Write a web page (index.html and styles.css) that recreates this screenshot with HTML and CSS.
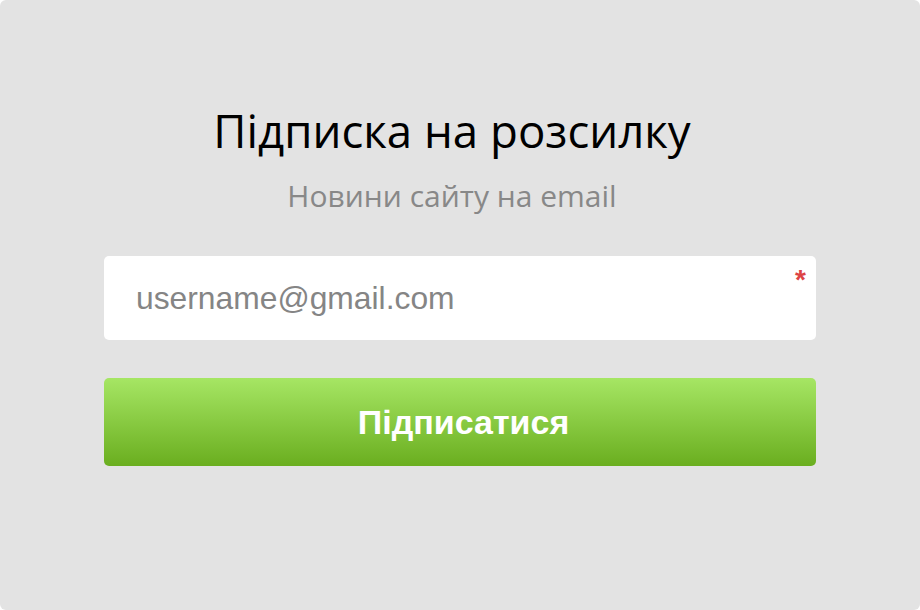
FILE: index.html
```html
<!DOCTYPE html>
<html lang="uk">
<head>
<meta charset="utf-8">
<link rel="stylesheet" href="styles.css">
</head>
<body>
<div class="panel">
  <h1 class="title">Підписка на розсилку</h1>
  <p class="subtitle">Новини сайту на email</p>
  <form class="form">
    <div class="field">
      <input class="input" type="email" placeholder="username@gmail.com">
      <span class="required">*</span>
    </div>
    <button class="submit" type="button">Підписатися</button>
  </form>
</div>
</body>
</html>
```
FILE: styles.css
```css
html, body {
  margin: 0;
  padding: 0;
  background: #ffffff;
}
.panel {
  width: 920px;
  height: 610px;
  box-sizing: border-box;
  background: #e3e3e3;
  border-radius: 6px;
  padding: 100px 104px 0;
  display: flex;
  flex-direction: column;
  align-items: stretch;
}
.title {
  margin: 0;
  padding-right: 16px;
  text-align: center;
  font-family: "Open Sans", "Noto Sans", sans-serif;
  font-weight: 400;
  font-size: 45.6px;
  line-height: 60px;
  color: #000;
}
.subtitle {
  margin: 16px 0 0;
  padding-right: 16px;
  text-align: center;
  font-family: "Open Sans", "Noto Sans", sans-serif;
  font-size: 30px;
  line-height: 40px;
  color: #888888;
}
.form {
  margin-top: 40px;
  display: flex;
  flex-direction: column;
  gap: 38px;
}
.field {
  position: relative;
}
.input {
  display: block;
  width: 100%;
  height: 84px;
  box-sizing: border-box;
  border: none;
  border-radius: 5px;
  background: #fff;
  padding: 0 32px;
  font-family: "Liberation Sans", Arial, sans-serif;
  font-size: 31.8px;
  color: #333;
  outline: none;
}
.input::placeholder {
  color: #858585;
}
.required {
  position: absolute;
  right: 10px;
  top: 10px;
  font-family: "Liberation Sans", Arial, sans-serif;
  font-weight: 700;
  font-size: 28px;
  line-height: 28px;
  color: #dd4444;
}
.submit {
  display: block;
  width: 100%;
  height: 88px;
  border: none;
  border-radius: 5px;
  padding: 0 0 0 7px;
  background: linear-gradient(to bottom, #a6e664 0%, #6aae1f 100%);
  color: #fff;
  font-family: "Liberation Sans", Arial, sans-serif;
  font-weight: 700;
  font-size: 34px;
  cursor: pointer;
}
```
